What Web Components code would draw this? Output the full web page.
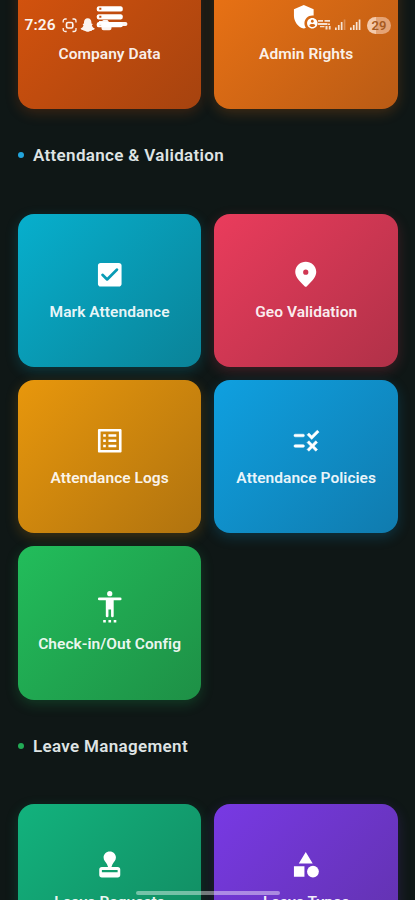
<!DOCTYPE html>
<html lang="en">
<head>
<meta charset="utf-8">
<meta name="viewport" content="width=device-width, initial-scale=1">
<title>Attendance</title>
<style>
  body {
    margin: 0;
    background: #0f1716;
    font-family: Roboto, sans-serif;
    overflow: hidden;
  }
</style>
</head>
<body>
<app-screen>
  <status-bar slot="status"></status-bar>

  <card-grid>
    <menu-card icon="storage" from="#d8540d" to="#a6430f">Company Data</menu-card>
    <menu-card icon="admin" from="#ee7414" to="#b95b15">Admin Rights</menu-card>
  </card-grid>

  <section-title color="#22a5dc">Attendance &amp; Validation</section-title>
  <card-grid>
    <menu-card icon="checkbox" from="#07afcd" to="#0a8398">Mark Attendance</menu-card>
    <menu-card icon="pin" from="#ea3c5c" to="#b03148">Geo Validation</menu-card>
    <menu-card icon="list" from="#e8970c" to="#b0730f">Attendance Logs</menu-card>
    <menu-card icon="rule" from="#0fa0e0" to="#107bae">Attendance Policies</menu-card>
    <menu-card icon="person" from="#22bd5b" to="#1e9046">Check-in/Out Config</menu-card>
  </card-grid>

  <section-title color="#22ab55" style="--extra: 0.8px">Leave Management</section-title>
  <card-grid>
    <menu-card icon="stamp" from="#12b27d" to="#128960">Leave Requests</menu-card>
    <menu-card icon="shapes" from="#7839e4" to="#6032aa">Leave Types</menu-card>
  </card-grid>
</app-screen>

<script>
const icons = {
  storage: '<path fill-rule="evenodd" d="M3.5 4h17a1.5 2 0 0 1 0 4h-17a1.5 2 0 0 1 0-4zM4 5.2v1.5h1.6V5.2zM3.5 10h17a1.5 2 0 0 1 0 4h-17a1.5 2 0 0 1 0-4zM4 11.2v1.5h1.6v-1.5zM3.5 16h17a1.5 2 0 0 1 0 4h-17a1.5 2 0 0 1 0-4zM4 17.2v1.5h1.6v-1.5z"/>',
  admin: '<path d="M17 11c.34 0 .67.04 1 .09V6.27L10.5 3 3 6.27v4.91c0 4.54 3.2 8.79 7.5 9.82.55-.13 1.08-.32 1.6-.55-.69-.98-1.1-2.17-1.1-3.45 0-3.31 2.69-6 6-6z"/><path d="M17 13c-2.21 0-4 1.79-4 4s1.79 4 4 4 4-1.79 4-4-1.79-4-4-4zm0 1.38c.62 0 1.12.51 1.12 1.12s-.51 1.12-1.12 1.12-1.12-.51-1.12-1.12.5-1.12 1.12-1.12zm0 5.37c-.93 0-1.74-.46-2.24-1.17.05-.72 1.51-1.08 2.24-1.08s2.19.36 2.24 1.08c-.5.71-1.31 1.17-2.24 1.17z"/>',
  checkbox: '<path d="M19 3H5c-1.1 0-2 .9-2 2v14c0 1.1.9 2 2 2h14c1.1 0 2-.9 2-2V5c0-1.1-.9-2-2-2zm-8.290 13.290a1 1 0 0 1-1.410 0L5.710 12.700a1 1 0 0 1 1.410-1.410L10 14.170l6.880-6.880a1 1 0 0 1 1.410 1.410z"/>',
  pin: '<path d="M12 2C8 2 4 5 4 9.900c0 3.300 2.700 6.500 7.300 11 .4.400 1 .4 1.400 0 4.600-4.500 7.300-7.700 7.300-11C20 5 16 2 12 2zm0 10a2 2 0 1 1 0-4 2 2 0 0 1 0 4z"/>',
  list: '<path d="M11 7h6v2h-6zm0 4h6v2h-6zm0 4h6v2h-6zM7 7h2v2H7zm0 4h2v2H7zm0 4h2v2H7z"/><path fill-rule="evenodd" d="M20.100 3H3.900c-.5 0-.9.4-.9.9v16.200c0 .4.400.9.900.9h16.200c.4 0 .9-.5.900-.9V3.900c0-.5-.5-.9-.9-.9zM19 19H5V5h14z"/>',
  rule: '<path d="M16.540 11 13 7.460l1.410-1.410 2.120 2.120 4.240-4.240 1.410 1.410zM4 7h6a1 1 0 0 1 0 2H4a1 1 0 0 1 0-2zM21 13.410 19.590 12 17 14.590 14.410 12 13 13.410 15.590 16 13 18.590 14.410 20 17 17.410 19.590 20 21 18.590 18.410 16zM4 15h6a1 1 0 0 1 0 2H4a1 1 0 0 1 0-2z" stroke="#fff" stroke-width=".4"/>',
  person: '<circle cx="12" cy="2" r="2"/><path d="M20 7h-5v12a1 1 0 0 1-2 0v-5h-2v5a1 1 0 0 1-2 0V7H4a1 1 0 0 1 0-2h16a1 1 0 0 1 0 2zM7 22h2v2H7zm4 0h2v2h-2zm4 0h2v2h-2z"/>',
  stamp: '<path fill-rule="evenodd" d="M12 1.900c2.700 0 4.700 2.100 4.700 4.600 0 2.200-1.500 3.300-2.600 5.200l-.8 2H18a2 2 0 0 1 2 2v4a2 2 0 0 1-2 2H6a2 2 0 0 1-2-2v-4a2 2 0 0 1 2-2h4.700l-.8-2C8.800 9.800 7.300 8.700 7.300 6.500c0-2.500 2-4.600 4.700-4.600zM6 16v1.700h12V16z"/>',
  shapes: '<path d="m12 2.200 5.300 8.800H6.700zM3 13.200h8v8H3z"/><circle cx="17.500" cy="17.200" r="4.500"/>'
};

class AppScreen extends HTMLElement {
  constructor() {
    super();
    this.attachShadow({ mode: 'open' }).innerHTML = `
      <style>
        :host {
          display: block;
          position: relative;
          width: 415px;
          height: 900px;
          overflow: hidden;
          background: #0f1716;
        }

        /* the page is scrolled, so the first row starts above the screen */
        main {
          margin-top: -44px;
          padding: 0 17px 0 17.800px;
        }

        .home {
          position: absolute;
          left: 136px;
          bottom: 5px;
          width: 144px;
          height: 4.500px;
          border-radius: 3px;
          background: rgba(255, 255, 255, 0.42);
        }
      </style>
      <main><slot></slot></main>
      <slot name="status"></slot>
      <div class="home"></div>
    `;
  }
}

class StatusBar extends HTMLElement {
  constructor() {
    super();
    this.attachShadow({ mode: 'open' }).innerHTML = `
      <style>
        :host {
          position: absolute;
          top: 14px;
          left: 0;
          right: 0;
          height: 22px;
          box-sizing: border-box;
          padding: 0 24px 0 24.500px;
          display: flex;
          align-items: center;
          color: #fff;
          opacity: 0.94;
        }

        .time {
          font-size: 15.500px;
          font-weight: 600;
          letter-spacing: 0.1px;
          width: 37px;
        }

        svg {
          flex: none;
        }

        .right {
          margin-left: auto;
          display: flex;
          align-items: center;
        }

        .battery {
          width: 24px;
          height: 17px;
          border-radius: 9px;
          background: linear-gradient(90deg, #f6d0b5 38%, #e7a87b 38%);
          color: #a55a22;
          font-size: 13px;
          font-weight: 600;
          line-height: 17px;
          text-align: center;
        }
      </style>
      <span class="time">7:26</span>
      <svg width="68" height="22" viewBox="0 0 68 22" fill="currentColor">
        <g fill="none" stroke="currentColor" stroke-width="1.300">
          <path d="M1.200 8.500V7a2 2 0 0 1 2-2h1.500M10.500 5H12a2 2 0 0 1 2 2v1.500M14 14v1.500a2 2 0 0 1-2 2h-1.500M4.700 17.500H3.200a2 2 0 0 1-2-2V14"/>
          <rect x="4.500" y="8.500" width="6.300" height="5.500" rx="1.500" stroke-width="1.700"/>
        </g>
        <path d="M25.700 4.300c-2.500 0-3.700 1.700-3.700 4v1.300l-1.400.3.900 1.500c-.5 1.500-1.700 2.500-2.900 3 .3 1.500 1.800 1.300 2.600 1.600.5 1.300 1.700.7 2.600 1.200 1.400.8 2.400.8 3.800 0 .9-.5 2.100.1 2.600-1.200.8-.3 2.300-.1 2.600-1.600-1.200-.5-2.400-1.500-2.900-3l.9-1.500-1.400-.3V8.300c0-2.300-1.200-4-3.700-4z"/>
        <path d="M37 7h3l1.500-1h4L47 8h16.500a1.900 1.900 0 0 1 0 3.900H49.500v2.300a2 2 0 0 1-2 2h-6a2 2 0 0 1-2-2V11.500H37z"/>
      </svg>
      <div class="right">
        <svg width="50" height="22" viewBox="0 0 50 22" fill="currentColor">
          <path d="M1 6h5v1.700H1zM7.500 6H13v1.700H7.500zM1 9h9.500v2H1zM11 9.500h2v1.500h-2zM3 12h4.500v1.300H3zM8.500 12h2v3.500h-2zM11.800 12h1.800v3.500h-1.800z" opacity=".85"/>
          <path d="M18 13.500h1.700V16H18zm2.900-2.500h1.700v5h-1.700zm2.900-3h1.700v8h-1.700zM33 13.500h1.700V16H33zm2.900-2.500h1.700v5h-1.700zm2.900-3h1.700v8h-1.700zM41.700 5.500h1.700V16h-1.700z" opacity=".88"/>
          <path d="M26.700 5.500h1.700V16h-1.700z" opacity=".3"/>
        </svg>
        <div class="battery">29</div>
      </div>
    `;
  }
}

class CardGrid extends HTMLElement {
  constructor() {
    super();
    this.attachShadow({ mode: 'open' }).innerHTML = `
      <style>
        :host {
          display: grid;
          grid-template-columns: 1fr 1fr;
          grid-auto-rows: 153.300px;
          gap: 13px;
        }
      </style>
      <slot></slot>
    `;
  }
}

class SectionTitle extends HTMLElement {
  constructor() {
    super();
    this.attachShadow({ mode: 'open' }).innerHTML = `
      <style>
        :host {
          display: flex;
          align-items: center;
          gap: 8.700px;
          height: 20px;
          padding: calc(35.800px + var(--extra, 0px)) 0 calc(48.600px - var(--extra, 0px));
          color: #dfe4e4;
          font-size: 17px;
          font-weight: 600;
          line-height: 20px;
          letter-spacing: 0.330px;
          white-space: nowrap;
        }

        .dot {
          width: 6.500px;
          height: 6.500px;
          border-radius: 50%;
          background: ${this.getAttribute('color')};
        }
      </style>
      <span class="dot"></span>
      <slot></slot>
    `;
  }
}

class MenuCard extends HTMLElement {
  constructor() {
    super();
    const from = this.getAttribute('from');
    const to = this.getAttribute('to');
    this.attachShadow({ mode: 'open' }).innerHTML = `
      <style>
        :host {
          display: flex;
          flex-direction: column;
          align-items: center;
          justify-content: center;
          gap: 10.400px;
          padding-top: 0.600px;
          box-sizing: border-box;
          border-radius: 16px;
          background: linear-gradient(135deg, ${from}, ${to});
          box-shadow: 0 4px 13px ${from}38;
          color: rgba(255, 255, 255, 0.93);
          font-size: 15.500px;
          font-weight: 600;
          line-height: 22px;
          letter-spacing: 0.050px;
          white-space: nowrap;
        }

        svg {
          width: 31.500px;
          height: 31.500px;
          fill: #fff;
          overflow: visible;
        }
      </style>
      <svg viewBox="0 0 24 24">${icons[this.getAttribute('icon')]}</svg>
      <span><slot></slot></span>
    `;
  }
}

customElements.define('app-screen', AppScreen);
customElements.define('status-bar', StatusBar);
customElements.define('card-grid', CardGrid);
customElements.define('section-title', SectionTitle);
customElements.define('menu-card', MenuCard);
</script>
</body>
</html>
